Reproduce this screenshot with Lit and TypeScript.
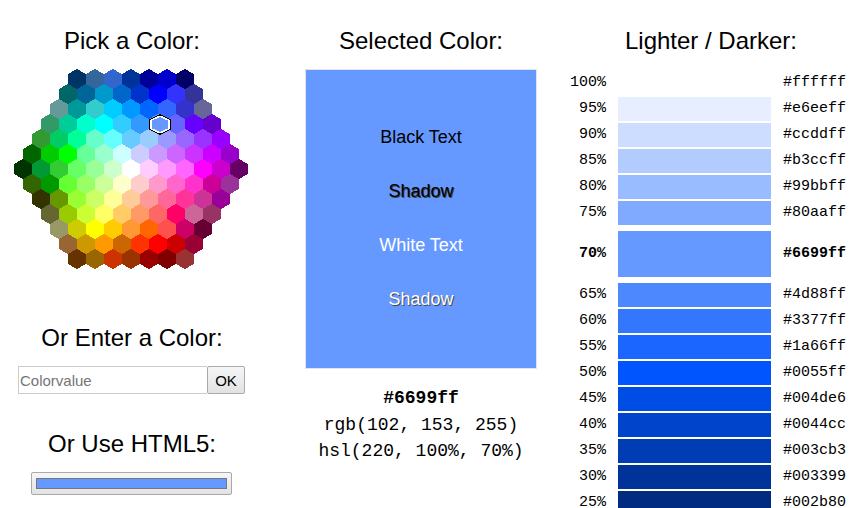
import { LitElement, html, css, svg } from "lit";
import { customElement } from "lit/decorators.js";

const ROWS = [
  "003366,336699,3366CC,003399,000099,0000CC,000066",
  "006666,006699,0099CC,0066CC,0033CC,0000FF,3333FF,333399",
  "669999,009999,33CCCC,00CCFF,0099FF,0066FF,3366FF,3333CC,666699",
  "339966,00CC99,00FFCC,00FFFF,33CCFF,3399FF,6699FF,6666FF,6600FF,6600CC",
  "339933,00CC66,00FF99,66FFCC,66FFFF,66CCFF,99CCFF,9999FF,9966FF,9933FF,9900FF",
  "006600,00CC00,00FF00,66FF99,99FFCC,CCFFFF,CCCCFF,CC99FF,CC66FF,CC33FF,CC00FF,9900CC",
  "003300,009933,33CC33,66FF66,99FF99,CCFFCC,FFFFFF,FFCCFF,FF99FF,FF66FF,FF00FF,CC00CC,660066",
  "336600,009900,66FF33,99FF66,CCFF99,FFFFCC,FFCCCC,FF99CC,FF66CC,FF33CC,CC0099,993399",
  "333300,669900,99FF33,CCFF66,FFFF99,FFCC99,FF9999,FF6699,FF3399,CC3399,990099",
  "666633,99CC00,CCFF33,FFFF66,FFCC66,FF9966,FF6666,FF0066,CC6699,993366",
  "999966,CCCC00,FFFF00,FFCC00,FF9933,FF6600,FF5050,CC0066,660033",
  "996633,CC9900,FF9900,CC6600,FF3300,FF0000,CC0000,990033",
  "663300,996600,CC3300,993300,990000,800000,993333",
].map((r) => r.split(","));

const SHADES: [string, string][] = [
  ["100%", "#ffffff"], ["95%", "#e6eeff"], ["90%", "#ccddff"], ["85%", "#b3ccff"],
  ["80%", "#99bbff"], ["75%", "#80aaff"], ["70%", "#6699ff"], ["65%", "#4d88ff"],
  ["60%", "#3377ff"], ["55%", "#1a66ff"], ["50%", "#0055ff"], ["45%", "#004de6"],
  ["40%", "#0044cc"], ["35%", "#003cb3"], ["30%", "#003399"], ["25%", "#002b80"],
];

const hexPoints = (cx: number, top: number) => {
  const l = cx - 9, r = cx + 9;
  return `${cx},${top} ${r},${top + 5} ${r},${top + 15} ${cx},${top + 20} ${l},${top + 15} ${l},${top + 5}`;
};

// Selection ring: hexagon centred on (cx, cy), half-width hw, half-height hh.
const ringPoints = (cx: number, cy: number, hw: number, hh: number) => {
  const s = hh / 2;
  return `${cx},${cy - hh} ${cx + hw},${cy - s} ${cx + hw},${cy + s} ${cx},${cy + hh} ${cx - hw},${cy + s} ${cx - hw},${cy - s}`;
};

@customElement("app-root")
export class AppRoot extends LitElement {
  static styles = css`
    :host {
      display: block;
      height: 508px;
      overflow: hidden;
      background: #fff;
      color: #000;
      font-family: "Liberation Sans", Arial, sans-serif;
    }
    .page {
      display: grid;
      grid-template-columns: 290px 280px 282px;
      padding-top: 25px;
    }
    .col {
      display: flex;
      flex-direction: column;
      align-items: center;
    }
    .col-pick { width: 264px; }
    .col-sel { width: 262px; }
    h2 {
      margin: 0;
      font-size: 24px;
      line-height: 32px;
      font-weight: 400;
      text-align: center;
    }
    .map {
      display: block;
      margin-top: 12px;
      align-self: flex-start;
    }
    .enter { margin-top: 43px; }
    .form {
      display: flex;
      margin-top: 12px;
      align-self: flex-start;
      margin-left: 18px;
    }
    .form input {
      box-sizing: border-box;
      width: 189px;
      height: 28px;
      padding: 0 1px;
      border: 1px solid #ccc;
      border-right: 0;
      outline: none;
      font: 15px "Liberation Sans", Arial, sans-serif;
    }
    .form input::placeholder { color: #757575; opacity: 1; }
    .form button {
      box-sizing: border-box;
      width: 38px;
      height: 28px;
      padding: 0;
      border: 1px solid #aaa;
      border-radius: 2px;
      background: linear-gradient(#f6f6f6, #e2e2e2);
      color: #000;
      font: 15px "Liberation Sans", Arial, sans-serif;
    }
    .use { margin-top: 34px; }
    .native {
      display: block;
      box-sizing: border-box;
      width: 201px;
      height: 23px;
      margin: 12px 0 0 31px;
      padding: 0;
      align-self: flex-start;
      border: 1px solid #aaa;
      border-radius: 2px;
      background: linear-gradient(#f6f6f6, #e2e2e2);
    }
    .native::-webkit-color-swatch-wrapper { padding: 5px 4px; }
    .native::-webkit-color-swatch { border: 1px solid #777; border-radius: 0; }
    .swatch {
      box-sizing: border-box;
      width: 232px;
      height: 300px;
      margin-top: 12px;
      padding-bottom: 2px;
      border: 1px solid #e4e4e4;
      background: #6699ff;
      display: flex;
      flex-direction: column;
      justify-content: center;
      gap: 30px;
      text-align: center;
      font-size: 18px;
      line-height: 24px;
    }
    .black { color: #000; }
    .white { color: #fff; }
    .shadow { text-shadow: 1px 1px 0 #444; }
    .info {
      margin-top: 16px;
      font: 18px/26.6px "Liberation Mono", "Courier New", monospace;
      text-align: center;
    }
    .info b { font-weight: 700; }
    .shades {
      display: flex;
      flex-direction: column;
      gap: 2px;
      margin-top: 14px;
      align-self: stretch;
      font: 15px "Liberation Mono", "Courier New", monospace;
    }
    .shade {
      display: grid;
      grid-template-columns: 36px 153px auto;
      column-gap: 12px;
      align-items: center;
      height: 24px;
    }
    .shade.current {
      height: 46px;
      margin: 4px 0;
      font-weight: 700;
    }
    .shade span { padding-bottom: 2px; }
    .pct { text-align: right; }
    .bar { height: 100%; }
  `;

  private renderMap() {
    return html`<svg class="map" width="262" height="210" viewBox="0 0 262 210" shape-rendering="crispEdges">
      ${ROWS.map((row, i) => {
        const x0 = 131 - (row.length * 18) / 2;
        return row.map(
          (c, j) => svg`<polygon points=${hexPoints(x0 + j * 18 + 9, i * 15)} fill="#${c}"></polygon>`
        );
      })}
      <polygon points=${ringPoints(160, 55.5, 11, 10.5)} fill="#000"></polygon>
      <polygon points=${ringPoints(160, 55.5, 9.7, 9.2)} fill="#fff"></polygon>
      <polygon points=${ringPoints(160, 55.5, 8, 7.6)} fill="#6699ff"></polygon>
    </svg>`;
  }

  render() {
    return html`<div class="page">
      <section class="col col-pick">
        <h2>Pick a Color:</h2>
        ${this.renderMap()}
        <h2 class="enter">Or Enter a Color:</h2>
        <div class="form">
          <input type="text" placeholder="Colorvalue" />
          <button type="button">OK</button>
        </div>
        <h2 class="use">Or Use HTML5:</h2>
        <input class="native" type="color" value="#6699ff" />
      </section>
      <section class="col col-sel">
        <h2>Selected Color:</h2>
        <div class="swatch">
          <div class="black">Black Text</div>
          <div class="black shadow">Shadow</div>
          <div class="white">White Text</div>
          <div class="white shadow">Shadow</div>
        </div>
        <div class="info">
          <div><b>#6699ff</b></div>
          <div>rgb(102, 153, 255)</div>
          <div>hsl(220, 100%, 70%)</div>
        </div>
      </section>
      <section class="col col-shades">
        <h2>Lighter / Darker:</h2>
        <div class="shades">
          ${SHADES.map(
            ([p, c]) => html`<div class="shade ${p === "70%" ? "current" : ""}">
              <span class="pct">${p}</span>
              <div class="bar" style="background:${c}"></div>
              <span>${c}</span>
            </div>`
          )}
        </div>
      </section>
    </div>`;
  }
}
